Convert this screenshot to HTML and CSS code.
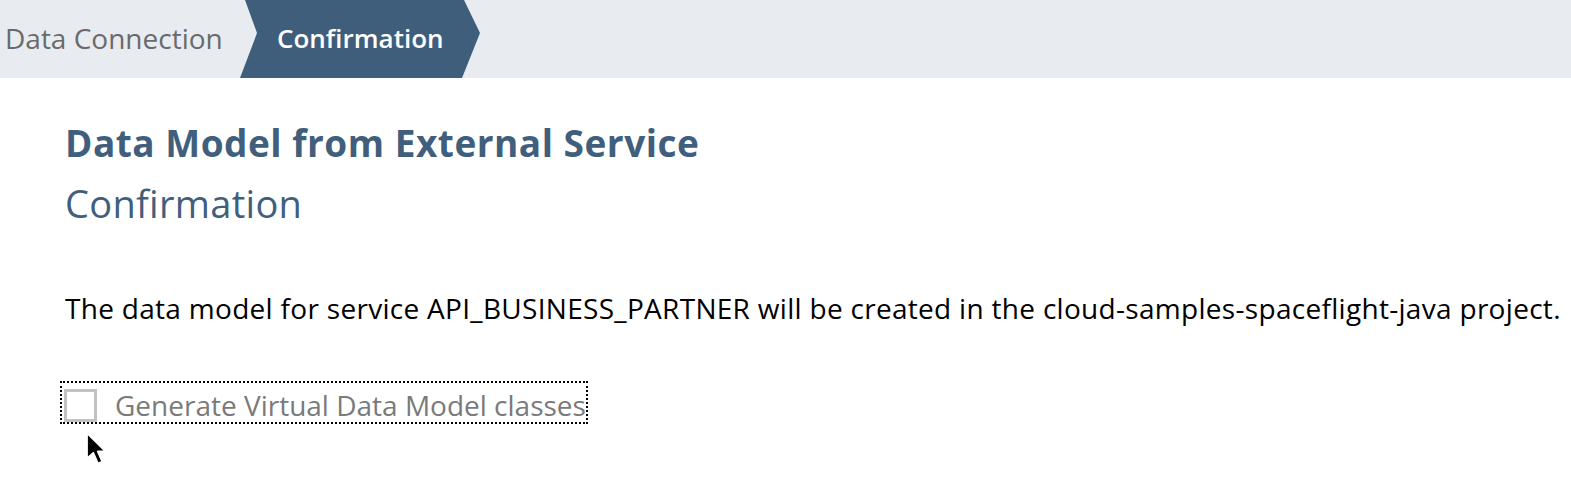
FILE: index.html
```html
<!DOCTYPE html>
<html>
<head>
<meta charset="utf-8">
<link rel="stylesheet" href="styles.css">
</head>
<body>
<header class="steps">
  <div class="step">Data Connection</div>
  <div class="step current">Confirmation</div>
</header>
<main class="content">
  <h1 class="title">Data Model from External Service</h1>
  <h2 class="subtitle">Confirmation</h2>
  <p class="message">The data model for service API_BUSINESS_PARTNER will be created in the cloud-samples-spaceflight-java project.</p>
  <div class="check-row">
    <label class="check">
      <span class="box"></span>
      <span class="check-label">Generate Virtual Data Model classes</span>
    </label>
  </div>
</main>
<svg class="cursor" width="28" height="40" viewBox="0 0 28 40">
  <path d="M3 3 L3 28.5 L9.3 22.8 L14 33.5 L18.3 31.6 L13.7 21.5 L21.8 21.5 Z" fill="#000" stroke="#fff" stroke-width="1.8" stroke-linejoin="round"/>
</svg>
</body>
</html>
```
FILE: styles.css
```css
html, body {
  margin: 0;
  padding: 0;
  background: #ffffff;
  font-family: "Open Sans", "Liberation Sans", Arial, sans-serif;
}
body {
  position: relative;
  width: 1571px;
  height: 482px;
  overflow: hidden;
}
.steps {
  height: 78px;
  background: #e8ebf0;
  display: flex;
  align-items: stretch;
}
.step {
  display: flex;
  align-items: center;
  font-size: 28px;
  color: #6a6a6a;
  padding-left: 5px;
  padding-bottom: 3px;
  width: 240px;
  box-sizing: border-box;
}
.step.current {
  width: 240px;
  padding-left: 37px;
  background: #3e5e7b;
  color: #ffffff;
  font-size: 26px;
  font-weight: 600;
  clip-path: polygon(5px 0, 224px 0, 240px 33px, 222px 78px, 0 78px, 17px 33px);
}
.content {
  padding-left: 65px;
}
.title {
  margin: 0;
  padding-top: 43px;
  font-size: 37px;
  letter-spacing: 0.5px;
  line-height: 44px;
  font-weight: bold;
  color: #415f7d;
}
.subtitle {
  margin: 0;
  padding-top: 15px;
  font-size: 38px;
  letter-spacing: 0.3px;
  line-height: 46px;
  font-weight: normal;
  color: #415f7d;
}
.message {
  margin: 0;
  padding-top: 64px;
  font-size: 28px;
  letter-spacing: 0.3px;
  line-height: 36px;
  color: #000000;
}
.check-row {
  padding-top: 55px;
  margin-left: -5px;
}
.check {
  display: inline-flex;
  align-items: center;
  gap: 18px;
  height: 43px;
  box-sizing: border-box;
  padding: 8px 2px 2px 4px;
  outline: 2px dotted #000;
  outline-offset: -2px;
}
.box {
  width: 33px;
  height: 33px;
  box-sizing: border-box;
  border: 3px solid #c2c2c2;
  background: #fff;
}
.check-label {
  font-size: 28px;
  line-height: 33px;
  color: #7a7a7a;
}
.cursor {
  position: absolute;
  left: 84px;
  top: 430px;
}
```
